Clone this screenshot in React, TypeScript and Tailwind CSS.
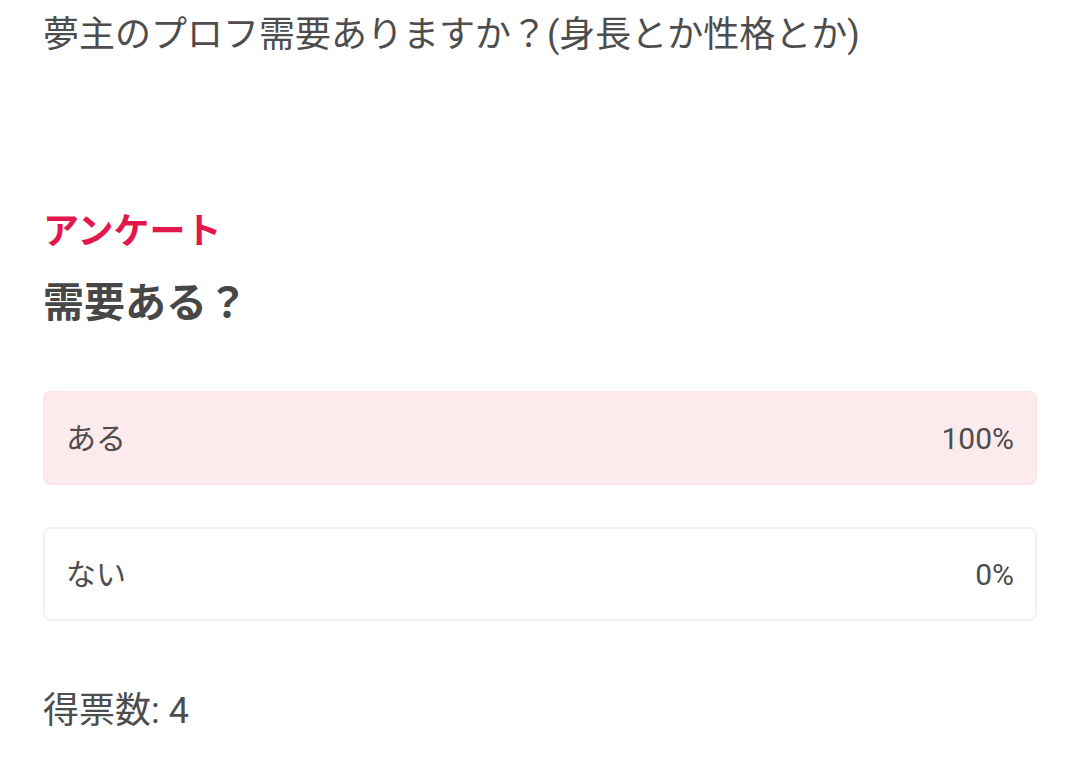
export default function App() {
  const options = [
    { label: "ある", pct: 100 },
    { label: "ない", pct: 0 },
  ];
  return (
    <div
      className="w-[1080px] h-[768px] bg-white text-[#4d4d4d] overflow-hidden px-[43px]"
      style={{ fontFamily: 'Roboto, "Noto Sans CJK JP", sans-serif' }}
    >
      <p className="text-[36px] leading-[48px] pt-[11px]">
        夢主のプロフ需要ありますか？(身長とか性格とか)
      </p>
      <div className="mt-[151px]">
        <p className="text-[#e3174b] font-bold text-[36px] leading-[44px]">アンケート</p>
        <p className="font-bold text-[41px] leading-[50px] mt-[24px] text-[#474747]">需要ある？</p>
      </div>
      <div className="flex flex-col gap-[42px] mt-[63px]">
        {options.map((o) => (
          <div
            key={o.label}
            className={`relative h-[94px] rounded-[8px] border-2 border-[#f2f2f2] overflow-hidden ${o.pct > 0 ? "bg-[#fdeaec] border-[#fbe5e8]" : "bg-white"}`}
          >
            <div className="flex items-center justify-between h-full px-[21px] text-[30px]">
              <span>{o.label}</span>
              <span>{o.pct}%</span>
            </div>
          </div>
        ))}
      </div>
      <p className="text-[36px] leading-[44px] mt-[68px]">得票数: 4</p>
    </div>
  );
}
